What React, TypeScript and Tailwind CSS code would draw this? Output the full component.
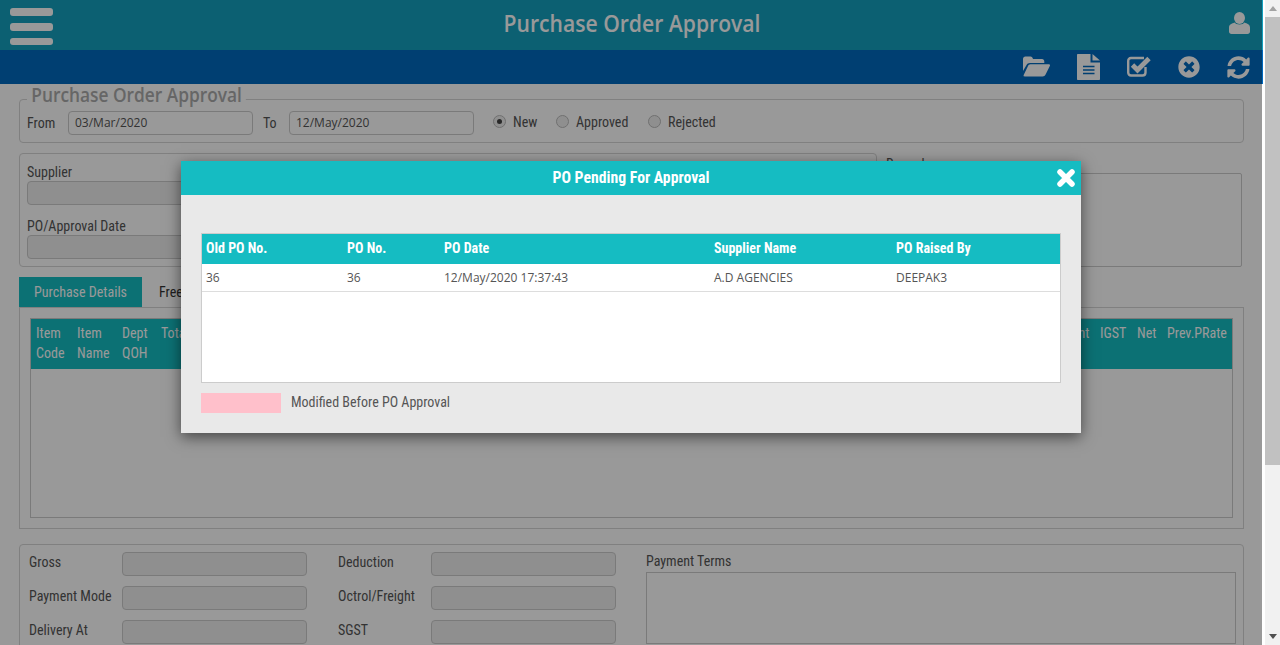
import React from "react";
import { FaTimesCircle, FaSyncAlt } from "react-icons/fa";

const cond = "font-['Roboto',sans-serif] [font-stretch:75%]";
const open = "font-['Open_Sans',sans-serif] [font-stretch:100%]";

function Input({ w, h = "h-6", white, children }: { w: string; h?: string; white?: boolean; children?: React.ReactNode }) {
  return (
    <div className={`${w} ${h} rounded-[4px] border border-[#ccc] ${white ? "bg-white" : "bg-[#eee]"} px-[6px] text-[12px] leading-[22px] text-[#555] ${open}`}>
      {children}
    </div>
  );
}

function Radio({ checked, label, w }: { checked?: boolean; label: string; w: string }) {
  return (
    <div className={`mb-[2px] flex items-center ${w}`}>
      <span className="flex h-[13px] w-[13px] items-center justify-center rounded-full border border-[#bbb] bg-[#eee]">
        {checked && <span className="h-[5px] w-[5px] rounded-full bg-[#444]" />}
      </span>
      <span className="ml-[7px] text-[14px] leading-none text-[#555]">{label}</span>
    </div>
  );
}

function Field({ label, label2 }: { label: string; label2?: string }) {
  return (
    <div className="flex h-6 items-center">
      <span className="mb-[4px] w-[93px] text-[14px] text-[#555]">{label}</span>
      <Input w="w-[185px]" />
      {label2 && (
        <>
          <span className="mb-[4px] ml-[31px] w-[93px] text-[14px] text-[#555]">{label2}</span>
          <Input w="w-[185px]" />
        </>
      )}
    </div>
  );
}

function HeadCell({ a, b, w }: { a: string; b?: string; w: string }) {
  return (
    <div className={`${w} shrink-0 text-[14px] leading-[20px] text-white`}>
      <div>{a}</div>
      {b && <div>{b}</div>}
    </div>
  );
}

function Page() {
  return (
    <div className={`w-[1263px] shrink-0 bg-white ${cond}`}>
      <div className="flex h-[50px] items-center bg-[#14a0bf] pl-[10px] pr-[13px]">
        <div className="mt-[2px] flex w-[43px] flex-col gap-[7px]">
          <span className="h-[8px] rounded-[3px] bg-white" />
          <span className="h-[8px] rounded-[3px] bg-white" />
          <span className="h-[7px] rounded-[3px] bg-white" />
        </div>
        <div className="flex-1 pr-[19px] text-center">
          <h1 className={`mb-[2px] inline-block scale-x-[0.88] text-[24px] font-semibold leading-none text-white ${open}`}>Purchase Order Approval</h1>
        </div>
        <svg width="21" height="22" viewBox="0 0 21 22" className="mb-[4px]" fill="#fff">
          <ellipse cx="10.5" cy="6" rx="5.5" ry="6" />
          <path d="M0 15.5C0 12.5 3 11.5 5.5 10.5 7 13 14 13 15.5 10.5 18 11.5 21 12.5 21 15.5V19.5C21 21 20 22 18.5 22H2.5C1 22 0 21 0 19.5Z" />
        </svg>
      </div>
      <div className="flex h-[34px] items-center justify-end bg-[#0069bf] pr-[13px] text-white">
        <svg width="27" height="21" viewBox="0 0 27 21" fill="#fff" className="mb-[2px] mr-[27px]">
          <path d="M0 18V3C0 1.6 1 .5 2.4.5H7.5C8.8.5 9.6 1.8 10 3H19C20.4 3 21.3 4 21.3 5.4V7H7C5.2 7 4.2 7.8 3.4 9.2L0 15Z" />
          <path d="M7.4 8.3H26C27 8.3 27.2 9.2 26.8 10L22.6 18.6C22 19.8 21 20.5 19.6 20.5H1.6C.5 20.5.3 19.6.8 18.8L5 10C5.5 9 6.2 8.3 7.4 8.3Z" />
        </svg>
        <svg width="23" height="26" viewBox="0 0 23 26" fill="#fff" className="mr-[27px]">
          <path d="M1 0H13.5V8.5H23V25C23 25.6 22.6 26 22 26H1C.4 26 0 25.6 0 25V1C0 .4.4 0 1 0Z" />
          <path d="M15.5 0L23 6.5H15.5Z" />
          <path d="M6 12.5H17.5M6 16H17.5M6 19.5H17.5" stroke="#0069bf" strokeWidth="1.6" fill="none" />
        </svg>
        <svg width="24" height="21" viewBox="0 0 24 21" fill="none" stroke="#fff" className="mb-[2px] mr-[27px]">
          <path d="M18.5 11V16.5C18.5 18.2 17.5 19.5 15.5 19.5H4C2.3 19.5 1.2 18.2 1.2 16.5V5C1.2 3.2 2.3 2 4 2H17" strokeWidth="2.4" />
          <path d="M5.5 9L10.5 14L22 2.5" strokeWidth="4.8" />
        </svg>
        <FaTimesCircle size={22} className="mr-[27px]" />
        <FaSyncAlt size={23} />
      </div>

      <div className="px-[19px]">
        <div className="relative mt-[15px] flex h-[44px] items-center rounded-[4px] border border-[#d5d5d5] pl-[7px] pt-[3px]">
          <span className={`absolute -top-[15px] left-[7px] origin-left scale-x-[0.865] bg-white px-[5px] text-[20px] font-semibold leading-[20px] text-[#aaa] ${open}`}>Purchase Order Approval</span>
          <span className="mt-[2px] w-[41px] text-[14px] text-[#555]">From</span>
          <Input w="w-[185px]" white>03/Mar/2020</Input>
          <span className="mt-[2px] ml-[10px] w-[26px] text-[14px] text-[#555]">To</span>
          <Input w="w-[185px]" white>12/May/2020</Input>
          <div className="ml-[19px] flex">
            <Radio checked label="New" w="w-[63px]" />
            <Radio label="Approved" w="w-[92px]" />
            <Radio label="Rejected" w="w-[90px]" />
          </div>
        </div>

        <div className="mt-[10px] flex h-[114px] gap-[9px]">
          <div className="w-[858px] rounded-[4px] border border-[#d5d5d5] px-[7px] pt-[9px] text-[14px] text-[#555]">
            <div className="leading-[18px]">Supplier</div>
            <Input w="w-[400px]" />
            <div className="mt-[12px] leading-[18px]">PO/Approval Date</div>
            <Input w="w-[400px]" />
          </div>
          <div className="flex flex-col text-[14px] text-[#555]">
            <div className="h-[20px] pt-[2px] leading-[18px]">Remarks</div>
            <div className="h-[94px] w-[356px] rounded-[2px] border border-[#ccc]" />
          </div>
        </div>

        <div className="mt-[10px] flex h-[30px] items-center text-[14px]">
          <div className="flex h-full w-[123px] items-center justify-center bg-[#15bcc2] text-white">Purchase Details</div>
          <div className="ml-[17px] text-[#333]">Free Items</div>
        </div>
        <div className="h-[222px] border border-[#d5d5d5] p-[10px]">
          <div className="h-full border border-[#ccc]">
            <div className="flex h-[50px] items-start justify-between bg-[#15bcc2] pl-[5px] pr-[4px] pt-[4px]">
              <div className="flex">
                <HeadCell a="Item" b="Code" w="w-[41px]" />
                <HeadCell a="Item" b="Name" w="w-[45px]" />
                <HeadCell a="Dept" b="QOH" w="w-[39px]" />
                <HeadCell a="Total" w="w-[40px]" />
              </div>
              <div className="flex">
                <HeadCell a="Amount" w="w-[54px]" />
                <HeadCell a="IGST" w="w-[37px]" />
                <HeadCell a="Net" w="w-[30px]" />
                <HeadCell a="Prev.PRate" w="w-[61px]" />
              </div>
            </div>
          </div>
        </div>

        <div className="mt-[15px] flex h-[120px] rounded-[4px] border border-[#d5d5d5] pl-[9px] pr-[7px] pt-[7px]">
          <div className="flex w-[617px] flex-col gap-[10px]">
            <Field label="Gross" label2="Deduction" />
            <Field label="Payment Mode" label2="Octrol/Freight" />
            <Field label="Delivery At" label2="SGST" />
          </div>
          <div className="flex-1 text-[14px] text-[#555]">
            <div className="h-[20px] leading-[18px]">Payment Terms</div>
            <div className="h-[72px] border border-[#ccc]" />
          </div>
        </div>
      </div>
    </div>
  );
}

function Modal() {
  const cols = ["w-[141px]", "w-[97px]", "w-[270px]", "w-[182px]", "w-[160px]"];
  const head = ["Old PO No.", "PO No.", "PO Date", "Supplier Name", "PO Raised By"];
  const row = ["36", "36", "12/May/2020 17:37:43", "A.D AGENCIES", "DEEPAK3"];
  return (
    <div className={`absolute left-[181px] top-[161px] h-[272px] w-[900px] bg-[#e9e9e9] shadow-[0_4px_14px_rgba(0,0,0,0.55)] ${cond}`}>
      <div className="relative flex h-[34px] items-center justify-center bg-[#15bcc2] text-[15.75px] font-bold text-white">
        PO Pending For Approval
        <svg width="18" height="18" viewBox="0 0 18 18" className="absolute right-[6px] top-[8px]">
          <path d="M3 3L15 15M15 3L3 15" stroke="#fff" strokeWidth="5.5" strokeLinecap="round" />
        </svg>
      </div>
      <div className="px-[20px] pt-[38px]">
        <div className="h-[150px] border border-[#ccc] bg-white">
          <div className="flex h-[30px] items-center bg-[#15bcc2] pb-[2px] pl-[4px] text-[14px] font-bold text-white">
            {head.map((t, i) => <div key={t} className={cols[i]}>{t}</div>)}
          </div>
          <div className={`flex h-[28px] items-center border-b border-[#ddd] pl-[4px] text-[12px] text-[#555] ${open}`}>
            {row.map((t, i) => <div key={i} className={cols[i]}>{t}</div>)}
          </div>
        </div>
        <div className="mt-[10px] flex items-start">
          <div className="h-[20px] w-[80px] bg-[#ffc0cb]" />
          <span className="ml-[10px] text-[14px] leading-[18px] text-[#555]">Modified Before PO Approval</span>
        </div>
      </div>
    </div>
  );
}

function Scrollbar() {
  return (
    <div className="ml-[2px] flex h-full w-[15px] flex-col items-center bg-[#f1f1f1]">
      <div className="flex h-[17px] items-center justify-center">
        <span className="h-0 w-0 border-x-[4px] border-b-[5px] border-x-transparent border-b-[#a3a3a3]" />
      </div>
      <div className="h-[448px] w-full bg-[#c1c1c1]" />
      <div className="flex-1" />
      <div className="flex h-[17px] items-center justify-center">
        <span className="h-0 w-0 border-x-[4px] border-t-[5px] border-x-transparent border-t-[#505050]" />
      </div>
    </div>
  );
}

export default function App() {
  return (
    <div className="relative flex h-[645px] w-[1280px] overflow-hidden bg-white">
      <Page />
      <Scrollbar />
      <div className="absolute left-0 top-0 h-full w-[1262px] bg-black/40" />
      <Modal />
    </div>
  );
}
